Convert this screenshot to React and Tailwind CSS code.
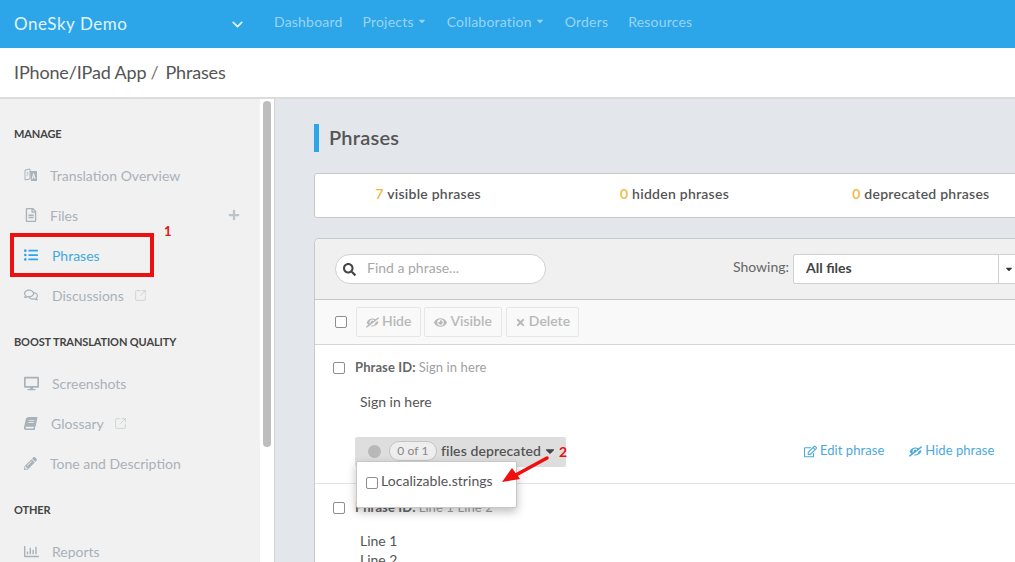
import { ChevronDown, SquareArrowOutUpRight } from "lucide-react";
import {
  FaBook,
  FaCaretDown,
  FaEye,
  FaEyeSlash,
  FaDesktop,
  FaListUl,
  FaPencilAlt,
  FaPlus,
  FaRegChartBar,
  FaRegComments,
  FaRegEdit,
  FaRegFileAlt,
  FaSearch,
  FaTimes,
} from "react-icons/fa";

const navLinks = [
  { label: "Dashboard" },
  { label: "Projects", caret: true },
  { label: "Collaboration", caret: true },
  { label: "Orders" },
  { label: "Resources" },
];

/** Open book with a letter on its right page (no matching icon in the packages) */
function TranslationIcon() {
  return (
    <svg width="14" height="14" viewBox="0 0 14 14" aria-hidden="true">
      <path d="M1 2 L6 1 V11 L1 12 Z" fill="none" stroke="currentColor" strokeWidth="1" />
      <path d="M2.5 5 H4.5 M3.5 4 V5 M2.5 8 L4.5 6" fill="none" stroke="currentColor" strokeWidth="0.8" />
      <path d="M6 3 H13 V13 H7 Z" fill="currentColor" />
      <path d="M8.2 11 L9.6 5.5 L11 11 M8.8 9.2 H10.4" fill="none" stroke="#f1f1f1" strokeWidth="1" />
    </svg>
  );
}

function SideHeading({ children, className = "" }) {
  return (
    <div className={`h-[18px] text-[11px] leading-[18px] font-bold tracking-[-0.12px] text-[#444] ${className}`}>
      {children}
    </div>
  );
}

function SideItem({ icon, label, gap = "w-[36px]", active = false, external = false, plus = false }) {
  return (
    <div
      className={`flex h-10 items-center text-[14px] ${active ? "text-[#3fa9e0]" : "text-[#a9b2b9]"}`}
    >
      <span className={`flex shrink-0 items-center pl-[10px] ${gap}`}>{icon}</span>
      <span>{label}</span>
      {external ? (
        <SquareArrowOutUpRight className="ml-[10px] text-[#c9ced2]" size={13} strokeWidth={1.5} />
      ) : null}
      {plus ? <FaPlus className="ml-auto text-[#bcc3c8]" size={12} /> : null}
    </div>
  );
}

function Checkbox({ className = "" }) {
  return (
    <span
      className={`block h-[12px] w-[12px] shrink-0 rounded-[2px] border border-[#8e8e8e] bg-white ${className}`}
    />
  );
}

function ToolButton({ icon, label, className = "px-[9px]" }) {
  return (
    <span
      className={`flex h-[30px] items-center gap-[3px] rounded-[2px] border border-[#e6e6e6] text-[14px] font-semibold text-[#b8b8b8] ${className}`}
    >
      {icon}
      <span className="pb-[3px]">{label}</span>
    </span>
  );
}

function Stat({ value, label }) {
  return (
    <div className="flex-1 pr-[20px] pb-[4px] text-center text-[14px] font-semibold tracking-[0.25px] text-[#555]">
      <span className="text-[#f0b83c]">{value}</span> {label}
    </div>
  );
}

export default function App() {
  return (
    <div className="relative flex h-[562px] w-[1015px] flex-col overflow-hidden bg-white font-['Lato','Noto_Sans',sans-serif]">
      <header className="flex h-12 shrink-0 items-center bg-[#2ca6e8]">
        <div className="w-[226px] pb-[1px] pl-[14px] text-[17px] tracking-[0.55px] text-[#e3f3fc]">OneSky Demo</div>
        <ChevronDown className="ml-[3px] text-[#dff1fb]" size={17} strokeWidth={2.5} />
        <nav className="ml-[28px] flex items-center gap-[20px] pb-[6px] text-[14px] tracking-[0.2px] text-[#9ad4f4]">
          {navLinks.map((link) => (
            <span key={link.label} className="flex items-center gap-[3px]">
              {link.label}
              {link.caret ? <FaCaretDown size={10} /> : null}
            </span>
          ))}
        </nav>
      </header>

      <div className="flex h-[51px] shrink-0 items-center border-b-2 border-[#dcdcdc] pl-[14px] text-[18px] tracking-[-0.15px] text-[#555]">
        <span>IPhone/IPad App</span>
        <span className="mr-[7px] ml-[4px] text-[#777]">/</span>
        <span>Phrases</span>
      </div>

      <div className="flex min-h-0 flex-1">
        <aside className="w-[260px] shrink-0 bg-[#f1f1f1] pt-[26px] pr-[20px] pl-[14px]">
          <SideHeading>MANAGE</SideHeading>
          <div className="mt-[12px]">
            <SideItem icon={<TranslationIcon />} label="Translation Overview" />
            <SideItem icon={<FaRegFileAlt size={14} />} label="Files" plus />
            <SideItem
              active
              gap="w-[38px]"
              icon={<FaListUl className="text-[#2ca6e8]" size={14} />}
              label="Phrases"
            />
            <SideItem
              gap="w-[38px]"
              external
              icon={<FaRegComments size={14} />}
              label="Discussions"
            />
          </div>
          <SideHeading className="mt-[18px]">BOOST TRANSLATION QUALITY</SideHeading>
          <div className="mt-[12px]">
            <SideItem gap="w-[38px]" icon={<FaDesktop size={15} />} label="Screenshots" />
            <SideItem
              gap="w-[37px]"
              external
              icon={<FaBook className="-skew-x-12" size={13} />}
              label="Glossary"
            />
            <SideItem icon={<FaPencilAlt size={13} />} label="Tone and Description" />
          </div>
          <SideHeading className="mt-[18px]">OTHER</SideHeading>
          <div className="mt-[12px]">
            <SideItem gap="w-[38px]" icon={<FaRegChartBar size={15} />} label="Reports" />
          </div>
        </aside>

        <div className="w-[15px] shrink-0 border-r border-[#d5d5d5] bg-white pt-[2px] pl-[3px]">
          <div className="h-[346px] w-[8px] rounded-[4px] bg-[#bdbdbd]" />
        </div>

        <main className="min-w-0 flex-1 bg-[#e3e6eb] pt-[25px] pl-[39px]">
          <div className="flex h-[28px] w-[741px] items-center border-l-[5px] border-[#2ca6e8] pb-[3px] pl-[10px] text-[20px] font-semibold tracking-[0.2px] text-[#555]">
            Phrases
          </div>

          <div className="mt-[21px] flex h-[45px] w-[741px] items-center rounded-[3px] border border-[#c8c8c8] bg-white">
            <Stat value="7" label="visible phrases" />
            <Stat value="0" label="hidden phrases" />
            <Stat value="0" label="deprecated phrases" />
          </div>

          <section className="mt-[20px] w-[741px] rounded-t-[5px] border border-[#c8c8c8] bg-white">
            <div className="flex h-[61px] items-center rounded-t-[5px] border-b border-[#c8c8c8] bg-[#f0f0f0] pr-[6px] pl-[20px]">
              <div className="flex h-[30px] w-[211px] items-center rounded-full border border-[#d0d0d0] bg-white pl-[7px] text-[14px] text-[#a8a8a8]">
                <FaSearch className="mr-[11px] text-[#444]" size={13} />
                <span className="pb-[3px]">Find a phrase...</span>
              </div>
              <span className="ml-[187px] pb-[5px] text-[14px] text-[#666]">Showing:</span>
              <div className="ml-[4px] flex h-[30px] w-[246px] items-center rounded-[2px] border border-[#d0d0d0] bg-white text-[14px] font-bold text-[#444]">
                <span className="flex-1 pb-[3px] pl-[12px]">All files</span>
                <span className="flex h-full w-[40px] items-center justify-center border-l border-[#d0d0d0] pr-[20px]">
                  <FaCaretDown className="text-[#333]" size={10} />
                </span>
              </div>
            </div>

            <div className="flex h-[45px] items-center gap-[3px] border-b border-[#d5d5d5] bg-[#f9f9f9] pl-[20px]">
              <Checkbox className="mr-[6px]" />
              <ToolButton icon={<FaEyeSlash className="-scale-x-100" size={13} />} label="Hide" />
              <ToolButton icon={<FaEye size={13} />} label="Visible" />
              <ToolButton className="ml-[1px] px-[8px]" icon={<FaTimes size={11} />} label="Delete" />
            </div>

            <div className="h-[139px] border-b border-[#e4e4e4] pt-[13px]">
              <div className="flex h-[20px] items-center pl-[18px] text-[13px] tracking-[0.1px] text-[#a0a0a0]">
                <Checkbox className="mr-[10px]" />
                <span className="mr-[3px] font-bold text-[#666]">Phrase ID:</span>
                Sign in here
              </div>
              <div className="mt-[14px] pl-[45px] text-[14px] leading-[20px] text-[#555]">Sign in here</div>
              <div className="mt-[25px] flex items-center pl-[40px]">
                <div className="flex h-[30px] w-[211px] items-center rounded-[2px] bg-[#dedede] pl-[13px] text-[14px] font-semibold tracking-[0.1px] text-[#555]">
                  <span className="mb-[2px] h-[13px] w-[13px] rounded-full bg-[#b8b8b8]" />
                  <span className="mr-[4px] mb-[2px] ml-[8px] flex h-[20px] w-[48px] items-center justify-center rounded-full border border-[#c4c4c4] bg-[#eeeeee] pb-[1px] text-[12px] font-normal text-[#888]">
                    0 of 1
                  </span>
                  <span className="pb-[3px]">files deprecated</span>
                  <FaCaretDown className="mb-[2px] ml-[2px] text-[#444]" size={14} />
                </div>
                <div className="ml-[238px] flex items-center gap-[25px] pb-[2px] text-[13px] tracking-[0.05px] text-[#4ba9dd]">
                  <span className="flex items-center gap-[3px]">
                    <FaRegEdit size={13} />
                    Edit phrase
                  </span>
                  <span className="flex items-center gap-[3px]">
                    <FaEyeSlash className="-scale-x-100" size={13} />
                    Hide phrase
                  </span>
                </div>
              </div>
            </div>

            <div className="pt-[14px]">
              <div className="flex h-[20px] items-center pl-[18px] text-[13px] tracking-[0.1px] text-[#a0a0a0]">
                <Checkbox className="mr-[10px]" />
                <span className="mr-[3px] font-bold text-[#666]">Phrase ID:</span>
                Line 1 Line 2
              </div>
              <div className="mt-[13px] pl-[45px] text-[14px] leading-[19px] text-[#555]">
                <div>Line 1</div>
                <div>Line 2</div>
              </div>
            </div>
          </section>
        </main>
      </div>

      {/* dropdown open over the first phrase row */}
      <div className="absolute top-[461px] left-[356px] flex h-[47px] w-[161px] items-start rounded-[2px] border border-[#c8c8c8] bg-white pt-[11px] pl-[9px] text-[14px] leading-[16px] tracking-[0.05px] text-[#555] shadow-[0_4px_10px_rgba(0,0,0,0.25)]">
        <Checkbox className="mt-[4px] mr-[3px]" />
        Localizable.strings
      </div>

      {/* red annotations on top of the screenshot */}
      <div className="absolute top-[233px] left-[10px] h-[44px] w-[144px] border-4 border-[#ee0f0f]" />
      <span className="absolute top-[223px] left-[164px] text-[13px] leading-[16px] font-bold text-[#e81010]">1</span>
      <span className="absolute top-[444px] left-[559px] text-[14px] leading-[16px] font-bold text-[#e81010]">2</span>
      <svg className="absolute top-[452px] left-[498px]" width="54" height="36" viewBox="0 0 54 36">
        <path d="M49 6 L16 24" stroke="#ee0f0f" strokeWidth="3.5" strokeLinecap="round" />
        <path d="M4 30 L14 16 L22 27 Z" fill="#ee0f0f" />
      </svg>
    </div>
  );
}
